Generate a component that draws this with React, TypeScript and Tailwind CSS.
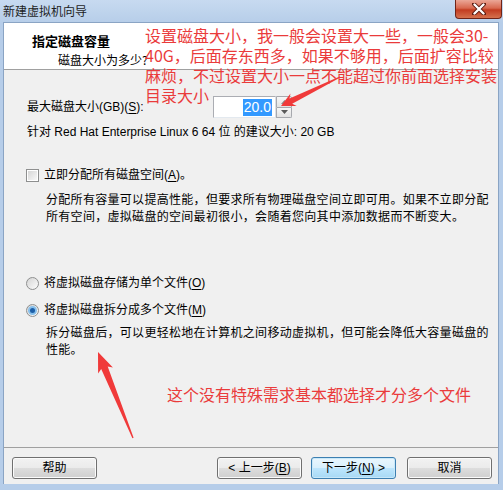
import { ReactNode } from 'react';

const ui = "font-['Liberation_Sans','Noto_Sans_CJK_SC',sans-serif]";
const cjk = "font-['Noto_Sans_CJK_SC',sans-serif]";

// tapered arrow like the ones from a screenshot tool: thin tail, fat head
function arrowPoints(tx: number, ty: number, hx: number, hy: number, headLen: number, headW: number, shaftW: number) {
  const dx = hx - tx;
  const dy = hy - ty;
  const len = Math.hypot(dx, dy);
  const ux = dx / len;
  const uy = dy / len;
  const nx = -uy;
  const ny = ux;
  const bx = hx - ux * headLen;
  const by = hy - uy * headLen;
  const pts = [
    [tx + nx * 0.6, ty + ny * 0.6],
    [bx + ux * 3 + nx * shaftW / 2, by + uy * 3 + ny * shaftW / 2],
    [bx + nx * headW / 2, by + ny * headW / 2],
    [hx, hy],
    [bx - nx * headW / 2, by - ny * headW / 2],
    [bx + ux * 3 - nx * shaftW / 2, by + uy * 3 - ny * shaftW / 2],
    [tx - nx * 0.6, ty - ny * 0.6],
  ];
  return pts.map(([x, y]) => `${x.toFixed(1)},${y.toFixed(1)}`).join(' ');
}

function U({ children }: { children: ReactNode }) {
  return <span className="underline underline-offset-2">{children}</span>;
}

function Btn({ children, primary }: { children: ReactNode; primary?: boolean }) {
  return (
    <div
      className={`w-[85px] h-[22px] rounded-[3px] border flex items-center justify-center text-[12px] text-black ${
        primary
          ? 'border-[#3c7fb1] bg-[linear-gradient(#eaf6fd_0%,#d9f0fc_50%,#bee6fd_50%,#a7d9f5_100%)] shadow-[inset_0_0_0_1px_#c8e8f9]'
          : 'border-[#707070] bg-[linear-gradient(#f2f2f2_0%,#ebebeb_50%,#dddddd_50%,#cfcfcf_100%)] shadow-[inset_0_0_0_1px_#fbfbfb]'
      }`}
    >
      {children}
    </div>
  );
}

function Radio({ checked }: { checked?: boolean }) {
  return (
    <div className="w-[13px] h-[13px] rounded-full border border-[#8e8f8f] bg-[linear-gradient(135deg,#d4d4d4,#fdfdfd)] flex items-center justify-center shrink-0">
      {checked && <div className="w-[5px] h-[5px] rounded-full bg-[#1c5fa8] shadow-[0_0_0_2px_#86bfeb]" />}
    </div>
  );
}

export default function App() {
  return (
    <div className={`relative w-[503px] h-[490px] overflow-hidden bg-[#b6cde9] flex flex-col ${ui}`}>
      {/* Title bar */}
      <div className="h-[22px] shrink-0 flex items-center pl-[3px] bg-[linear-gradient(#c7daf0,#b7cee9)] relative">
        <span className={`text-[12px] text-[#1e1e1e] ${cjk}`}>新建虚拟机向导</span>
        <div className="absolute right-[1px] top-0 w-[47px] h-[19px] rounded-b-[4px] border border-t-0 border-[#6f2418] bg-[linear-gradient(#eba797_0%,#d8684f_45%,#c23c21_55%,#d5714e_100%)] flex items-center justify-center">
          <svg width="14" height="12" viewBox="0 0 14 12">
            <path d="M2 1 L12 11 M12 1 L2 11" stroke="#5a1a10" strokeWidth="4" strokeLinecap="round" />
            <path d="M2.5 1.5 L11.5 10.5 M11.5 1.5 L2.5 10.5" stroke="#ffffff" strokeWidth="2.4" strokeLinecap="round" />
          </svg>
        </div>
      </div>

      {/* Window body */}
      <div className="flex-1 mx-[3px] mr-[4px] flex flex-col border border-b-0 border-[#8aa4c4] bg-[#f0f0f0]">
        {/* Header */}
        <div className="h-[47px] shrink-0 bg-white border-b border-[#a0a0a0] flex flex-col text-[12px] text-black">
          <div className={`pl-[28px] pt-[10px] leading-[16px] font-bold text-[13px] ${cjk}`}>指定磁盘容量</div>
          <div className={`pl-[54px] pt-[3px] leading-[16px] ${cjk}`}>磁盘大小为多少?</div>
        </div>

        {/* Content */}
        <div className="flex-1 flex flex-col pl-[23px] pt-[26px] text-[12px] text-black">
          <div className="h-[22px] flex items-center">
            <span className="w-[186px] leading-[16px]">
              最大磁盘大小(GB)(<U>S</U>):
            </span>
            <div className="flex h-[22px]">
              <div className="w-[63px] h-[22px] bg-white border border-[#abadb3] border-r-[#dbdfe6] border-b-[#e3e9ef] flex items-center justify-end pr-[3px]">
                <span className="bg-[#3399ff] text-white text-[14px] leading-[17px] px-[1px]">20.0</span>
              </div>
              <div className="w-[16px] flex flex-col">
                <div className="flex-1 border border-[#a7a9ae] rounded-tr-[2px] bg-[linear-gradient(#f7f7f7,#e2e2e2)] flex items-center justify-center">
                  <svg width="7" height="4" viewBox="0 0 7 4"><path d="M0 4 L3.5 0 L7 4 Z" fill="#8a8a8a" /></svg>
                </div>
                <div className="flex-1 border border-t-0 border-[#a7a9ae] rounded-br-[2px] bg-[linear-gradient(#f7f7f7,#e2e2e2)] flex items-center justify-center">
                  <svg width="7" height="4" viewBox="0 0 7 4"><path d="M0 0 L7 0 L3.5 4 Z" fill="#5a5a5a" /></svg>
                </div>
              </div>
            </div>
          </div>

          <div className="mt-[6px] leading-[16px]">针对 Red Hat Enterprise Linux 6 64 位 的建议大小: 20 GB</div>

          <div className="mt-[27px] h-[16px] flex items-center gap-[5px] -ml-[1px]">
            <div className="w-[13px] h-[13px] border border-[#8e8f8f] bg-white p-[1px] shrink-0">
              <div className="w-full h-full bg-[linear-gradient(135deg,#d6d6d6,#f8f8f8)]" />
            </div>
            <span className="leading-[16px]">
              立即分配所有磁盘空间(<U>A</U>)。
            </span>
          </div>

          <div className="mt-[9px] pl-[19px] leading-[17px] tracking-[0.3px]">
            <div>分配所有容量可以提高性能，但要求所有物理磁盘空间立即可用。如果不立即分配</div>
            <div>所有空间，虚拟磁盘的空间最初很小，会随着您向其中添加数据而不断变大。</div>
          </div>

          <div className="mt-[49px] h-[16px] flex items-center gap-[5px] -ml-[1px]">
            <Radio />
            <span className="leading-[16px]">
              将虚拟磁盘存储为单个文件(<U>O</U>)
            </span>
          </div>

          <div className="mt-[11px] h-[16px] flex items-center gap-[5px] -ml-[1px]">
            <Radio checked />
            <span className="leading-[16px]">
              将虚拟磁盘拆分成多个文件(<U>M</U>)
            </span>
          </div>

          <div className="mt-[7px] pl-[19px] leading-[17px] tracking-[0.3px]">
            <div>拆分磁盘后，可以更轻松地在计算机之间移动虚拟机，但可能会降低大容量磁盘的</div>
            <div>性能。</div>
          </div>
        </div>

        {/* Separator + buttons */}
        <div className="shrink-0 border-t border-[#a0a0a0] shadow-[inset_0_1px_0_#ffffff]" />
        <div className="shrink-0 h-[36px] flex items-start pt-[9px] pl-[8px] pr-[6px] bg-[#f0f0f0]">
          <Btn>帮助</Btn>
          <div className="flex-1" />
          <Btn>&lt; 上一步(<U>B</U>)</Btn>
          <div className="w-[9px]" />
          <Btn primary>
            下一步(<U>N</U>) &gt;
          </Btn>
          <div className="w-[11px]" />
          <Btn>取消</Btn>
        </div>
      </div>
      <div className="h-[6px] shrink-0" />

      {/* Red annotations drawn on top of the screenshot */}
      <div className={`absolute left-[145px] top-[25px] text-[16px] leading-[20px] text-[#ea3b3b] whitespace-nowrap ${cjk}`}>
        <div>设置磁盘大小，我一般会设置大一些，一般会30-</div>
        <div>40G，后面存东西多，如果不够用，后面扩容比较</div>
        <div>麻烦，不过设置大小一点不能超过你前面选择安装</div>
        <div>目录大小</div>
      </div>
      <div className={`absolute left-[167px] top-[384px] text-[16px] leading-[20px] text-[#ea3b3b] whitespace-nowrap ${cjk}`}>
        这个没有特殊需求基本都选择才分多个文件
      </div>
      <svg className="absolute left-0 top-0 pointer-events-none" width="503" height="490">
        <polygon points={arrowPoints(340, 77, 281, 106, 14, 14, 6)} fill="#f03a3a" />
        <polygon points={arrowPoints(133, 438, 98, 352, 20, 16, 7)} fill="#f03a3a" />
      </svg>
    </div>
  );
}
